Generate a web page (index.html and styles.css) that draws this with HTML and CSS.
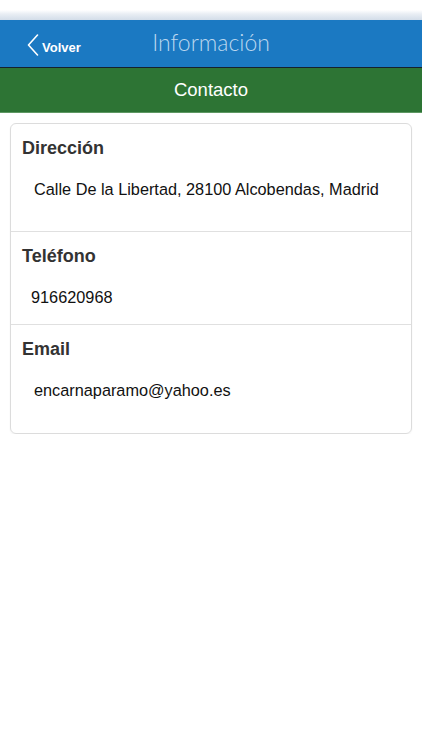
FILE: index.html
```html
<!DOCTYPE html>
<html lang="es">
<head>
  <meta charset="UTF-8">
  <meta name="viewport" content="width=device-width, initial-scale=1">
  <title>Información</title>
  <link rel="stylesheet" href="styles.css">
</head>
<body>
  <!-- Franja superior (barra de estado) -->
  <div class="status-bar"></div>

  <!-- Barra de navegación -->
  <div class="nav-bar">
    <a class="back-btn" href="#">
      <svg class="back-icon" width="12" height="22" viewBox="0 0 12 22">
        <path d="M10.5 1 L1.5 11 L10.5 21" fill="none" stroke="#fff" stroke-width="1.6" stroke-linecap="round" stroke-linejoin="round"/>
      </svg>
      <span>Volver</span>
    </a>
    <h1 class="nav-title">Información</h1>
  </div>

  <!-- Subtítulo -->
  <div class="section-bar">Contacto</div>

  <!-- Tarjeta de datos -->
  <div class="info-card">
    <div class="info-row">
      <h2 class="info-label">Dirección</h2>
      <p class="info-value">Calle De la Libertad, 28100 Alcobendas, Madrid</p>
    </div>
    <div class="info-row info-row--short">
      <h2 class="info-label">Teléfono</h2>
      <p class="info-value info-value--phone">916620968</p>
    </div>
    <div class="info-row">
      <h2 class="info-label">Email</h2>
      <p class="info-value">encarnaparamo@yahoo.es</p>
    </div>
  </div>
</body>
</html>
```

FILE: styles.css
```css
/* Estilos generales */
body {
  margin: 0;
  font-family: "Liberation Sans", Arial, sans-serif;
  background: #fff;
  color: #222;
}
/* Barra de estado */
.status-bar {
  height: 20px;
  background: linear-gradient(180deg, #fff 0%, #fff 50%, #e9eef4 70%, #d3dde9 100%);
}
/* Barra de navegación */
.nav-bar {
  position: relative;
  height: 47px;
  background: #1b79c2;
  border-bottom: 1px solid #15222e;
  display: flex;
  align-items: center;
  justify-content: center;
}
.back-btn {
  position: absolute;
  left: 27px;
  top: 14px;
  display: flex;
  align-items: center;
  gap: 3px;
  color: #fff;
  text-decoration: none;
  font-size: 13px;
  font-weight: bold;
}
.back-btn span {
  margin-top: 4px;
}
.nav-title {
  margin: 0 0 4px;
  font-family: Lato, "Open Sans", sans-serif;
  font-weight: 300;
  font-size: 23px;
  color: #bcd7ef;
}
/* Subtítulo verde */
.section-bar {
  height: 44px;
  line-height: 44px;
  background: #2d7434;
  border-bottom: 1px solid #5e9863;
  color: #fff;
  font-size: 18.5px;
  text-align: center;
}
/* Tarjeta */
.info-card {
  margin: 10px 10px 0;
  border: 1px solid #dcdcdc;
  border-radius: 6px;
  box-shadow: 0 1px 2px rgba(0,0,0,0.05);
}
.info-row {
  padding: 14px 11px 32px;
  border-bottom: 1px solid #e0e0e0;
}
.info-row:last-child {
  border-bottom: none;
  padding-bottom: 33px;
}
.info-row--short {
  padding-bottom: 17px;
}
.info-label {
  margin: 0;
  font-size: 18px;
  line-height: 20px;
  font-weight: bold;
  color: #333;
}
.info-value {
  margin: 21px 0 0 12px;
  font-size: 16.3px;
  line-height: 20px;
  color: #111;
}
.info-value--phone {
  margin-left: 9px;
}
```
